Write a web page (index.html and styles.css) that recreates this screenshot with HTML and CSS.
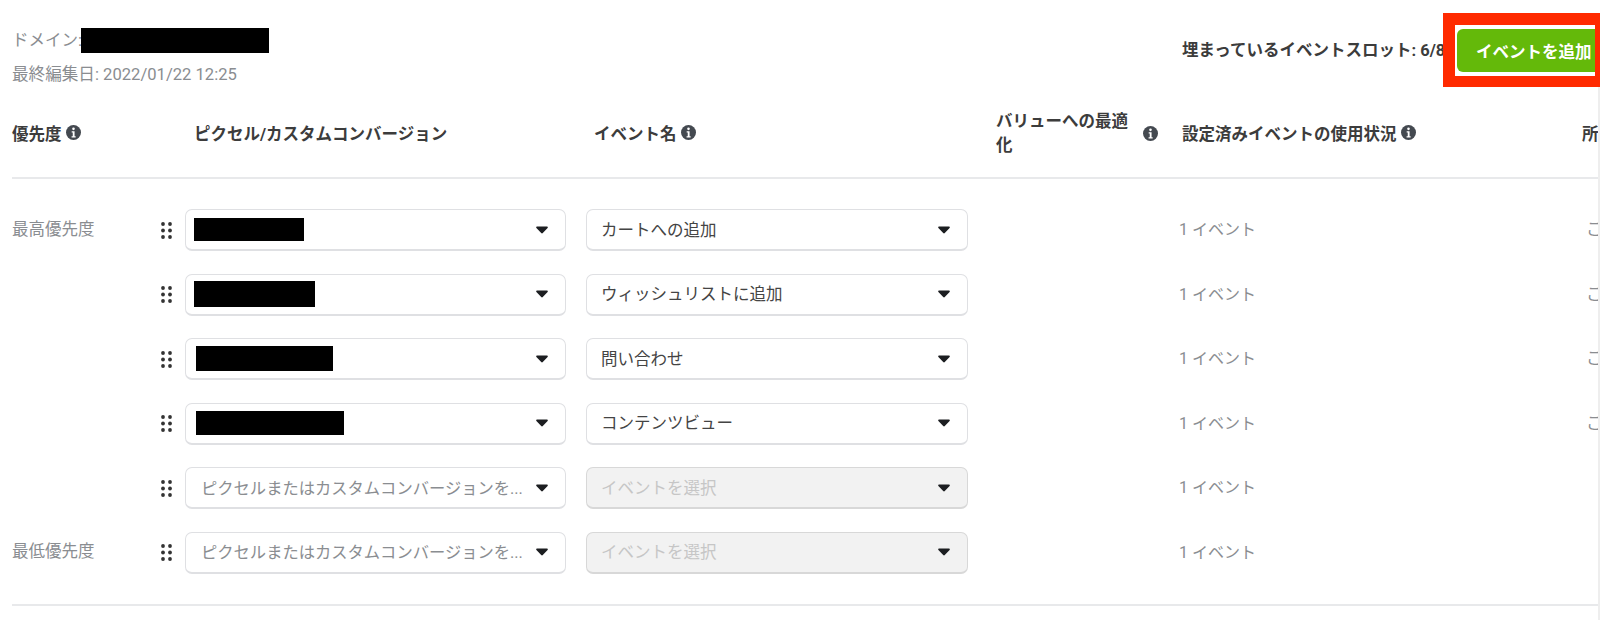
FILE: index.html
```html
<!DOCTYPE html>
<html lang="ja">
<head>
<meta charset="utf-8">
<title>イベント設定</title>
<link rel="stylesheet" href="styles.css">
</head>
<body>
<svg class="defs" aria-hidden="true">
  <symbol id="info" viewBox="0 0 14 14">
    <circle cx="7" cy="7" r="7" fill="#444950"/>
    <circle cx="7" cy="3.6" r="1.2" fill="#fff"/>
    <path d="M5.3 5.9H8v4.6h1v1.1H5.2v-1.1h1.1V7H5.3z" fill="#fff"/>
  </symbol>
  <symbol id="caret" viewBox="0 0 12 8">
    <path d="M1 .6h10c.8 0 1.1.8.6 1.4L6.8 7.1c-.4.5-1.2.5-1.6 0L.4 2C-.1 1.4.2.6 1 .6z" fill="#1c1e21"/>
  </symbol>
  <symbol id="grip" viewBox="0 0 11 17">
    <circle cx="2" cy="2" r="1.9"/><circle cx="9" cy="2" r="1.9"/>
    <circle cx="2" cy="8.5" r="1.9"/><circle cx="9" cy="8.5" r="1.9"/>
    <circle cx="2" cy="15" r="1.9"/><circle cx="9" cy="15" r="1.9"/>
  </symbol>
</svg>
<main class="page">
  <header class="top">
    <div class="meta">
      <div class="domain"><span>ドメイン:</span><span class="redact redact-domain"></span></div>
      <div class="edited">最終編集日: 2022/01/22 12:25</div>
    </div>
    <div class="slots">
      <span class="slot-text">埋まっているイベントスロット: 6/8</span>
      <button class="add-btn">イベントを追加</button>
    </div>
  </header>
  <div class="annotation"></div>

  <div class="head-row">
    <div class="th">優先度 <svg class="info"><use href="#info"/></svg></div>
    <div class="th">ピクセル/カスタムコンバージョン</div>
    <div class="th">イベント名 <svg class="info"><use href="#info"/></svg></div>
    <div class="th th-value"><span class="th-wrap">バリューへの最適化</span><svg class="info"><use href="#info"/></svg></div>
    <div class="th">設定済みイベントの使用状況 <svg class="info"><use href="#info"/></svg></div>
    <div class="th th-owner">所有者</div>
  </div>

  <section class="rows">
    <div class="row">
      <div class="prio">最高優先度</div>
      <svg class="grip"><use href="#grip"/></svg>
      <div class="select"><span class="redact redact-1"></span><svg class="caret"><use href="#caret"/></svg></div>
      <div class="select event"><span class="val">カートへの追加</span><svg class="caret"><use href="#caret"/></svg></div>
      <div class="usage">1 イベント</div>
      <div class="owner">ここ</div>
    </div>
    <div class="row">
      <div class="prio"></div>
      <svg class="grip"><use href="#grip"/></svg>
      <div class="select"><span class="redact redact-2"></span><svg class="caret"><use href="#caret"/></svg></div>
      <div class="select event"><span class="val">ウィッシュリストに追加</span><svg class="caret"><use href="#caret"/></svg></div>
      <div class="usage">1 イベント</div>
      <div class="owner">ここ</div>
    </div>
    <div class="row">
      <div class="prio"></div>
      <svg class="grip"><use href="#grip"/></svg>
      <div class="select"><span class="redact redact-3"></span><svg class="caret"><use href="#caret"/></svg></div>
      <div class="select event"><span class="val">問い合わせ</span><svg class="caret"><use href="#caret"/></svg></div>
      <div class="usage">1 イベント</div>
      <div class="owner">ここ</div>
    </div>
    <div class="row">
      <div class="prio"></div>
      <svg class="grip"><use href="#grip"/></svg>
      <div class="select"><span class="redact redact-4"></span><svg class="caret"><use href="#caret"/></svg></div>
      <div class="select event"><span class="val">コンテンツビュー</span><svg class="caret"><use href="#caret"/></svg></div>
      <div class="usage">1 イベント</div>
      <div class="owner">ここ</div>
    </div>
    <div class="row">
      <div class="prio"></div>
      <svg class="grip"><use href="#grip"/></svg>
      <div class="select"><span class="val placeholder">ピクセルまたはカスタムコンバージョンを...</span><svg class="caret"><use href="#caret"/></svg></div>
      <div class="select event disabled"><span class="val">イベントを選択</span><svg class="caret"><use href="#caret"/></svg></div>
      <div class="usage">1 イベント</div>
      <div class="owner"></div>
    </div>
    <div class="row">
      <div class="prio">最低優先度</div>
      <svg class="grip"><use href="#grip"/></svg>
      <div class="select"><span class="val placeholder">ピクセルまたはカスタムコンバージョンを...</span><svg class="caret"><use href="#caret"/></svg></div>
      <div class="select event disabled"><span class="val">イベントを選択</span><svg class="caret"><use href="#caret"/></svg></div>
      <div class="usage">1 イベント</div>
      <div class="owner"></div>
    </div>
  </section>
</main>
</body>
</html>
```
FILE: styles.css
```css
* { box-sizing: border-box; }
html, body { margin: 0; padding: 0; background: #fff; }
.defs { display: none; }
.page {
  position: relative;
  width: 1600px;
  height: 620px;
  overflow: hidden;
  padding-left: 12px;
  font-family: Roboto, "Noto Sans CJK JP", sans-serif;
  font-size: 16.5px;
  color: #8a8d91;
}
.page::after {
  content: "";
  position: absolute;
  top: 87px;
  right: 0;
  bottom: 0;
  width: 2px;
  background: #eeeeee;
}
.top {
  display: flex;
  justify-content: space-between;
  height: 98px;
  padding-top: 27px;
}
.domain { display: flex; align-items: center; height: 24px; }
.edited { margin-top: 12px; line-height: 24px; font-size: 16.6px; }
.redact { display: block; background: #000; }
.redact-domain { width: 188px; height: 25px; margin-left: -1px; margin-top: 2px; }
.slots { display: flex; align-items: center; gap: 11px; height: 43px; margin: 2px -12px 0 0; }
.slot-text { flex: none; width: 264px; margin-top: -4px; font-size: 16.5px; font-weight: 700; color: #3c3c3c; white-space: nowrap; }
.add-btn {
  flex: none;
  width: 155px;
  height: 43px;
  padding: 0 0 0 19px;
  border: 0;
  border-radius: 6px;
  background: #64b90a;
  color: #fff;
  font: 700 16.5px Roboto, "Noto Sans CJK JP", sans-serif;
  text-align: left;
  white-space: nowrap;
}
.annotation {
  position: absolute;
  left: 1443px;
  top: 13px;
  width: 157px;
  height: 74px;
  border: solid #ff2a00;
  border-width: 12px 5px 11px 12px;
}
.head-row {
  display: grid;
  grid-template-columns: 182px 400px 402px 186px 400px 30px;
  align-items: center;
  height: 81px;
  padding-bottom: 10px;
  border-bottom: 2px solid #e8e9eb;
  width: 1588px;
}
.th {
  display: flex;
  align-items: center;
  gap: 4px;
  font-size: 16.5px;
  font-weight: 700;
  color: #3c3c3c;
  white-space: nowrap;
}
.th-value { justify-content: space-between; padding: 2px 24px 0 0; line-height: 24px; white-space: normal; }
.th-wrap { width: 134px; }
.info { width: 15px; height: 15px; flex: none; }
.rows {
  display: flex;
  flex-direction: column;
  gap: 22.6px;
  width: 1588px;
  padding: 30px 0 30px;
  border-bottom: 2px solid #e8e9eb;
}
.row {
  display: grid;
  grid-template-columns: 149px 24px 381px 402px 618px 30px;
  align-items: center;
  height: 42px;
}
.grip { width: 11px; height: 17px; fill: #333; }
.prio { padding-bottom: 5px; }
.select {
  display: flex;
  align-items: center;
  justify-content: space-between;
  height: 42px;
  padding: 0 17px 0 8px;
  background: #fff;
  border: 1px solid #dfe0e3;
  border-bottom-width: 2px;
  border-radius: 7px;
  color: #444;
}
.event { margin-left: 20px; }
.val { padding: 0 0 2px 6px; white-space: nowrap; }
.placeholder { padding-left: 7px; font-size: 16.3px; color: #8a8d91; }
.disabled { background: #f2f2f2; border-color: #d8d8d8; }
.disabled .val { color: #c6c6c6; }
.caret { width: 12px; height: 8px; flex: none; }
.usage { font-size: 16px; padding: 0 0 4px 211px; }
.owner { padding-bottom: 4px; white-space: nowrap; }
.redact-1 { width: 110px; height: 23px; }
.redact-2 { width: 121px; height: 26px; }
.redact-3 { width: 137px; height: 25px; margin-left: 2px; }
.redact-4 { width: 148px; height: 24px; margin-left: 2px; }
```
